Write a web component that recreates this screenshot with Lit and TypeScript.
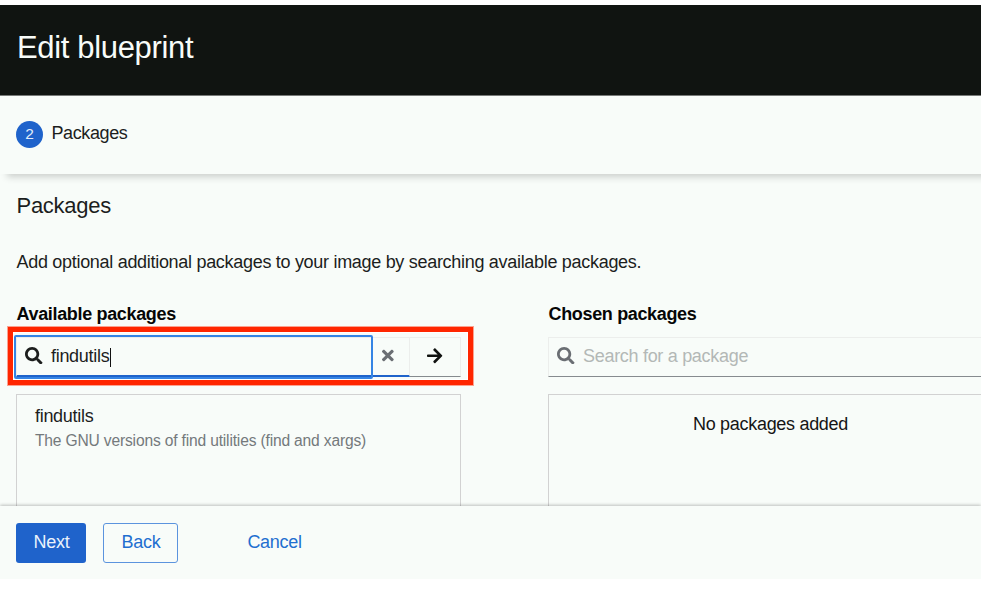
import { LitElement, html, css, svg } from "lit";
import { customElement, property } from "lit/decorators.js";

const icons = {
  search: {
    box: "0 0 512 512",
    d: "M505 442.7L405.3 343c-4.500-4.500-10.600-7-17-7H372c27.600-35.300 44-79.700 44-128C416 93.100 322.900 0 208 0S0 93.100 0 208s93.100 208 208 208c48.300 0 92.700-16.400 128-44v16.300c0 6.400 2.500 12.500 7 17l99.700 99.700c9.400 9.400 24.600 9.400 33.900 0l28.300-28.300c9.400-9.400 9.400-24.600.1-34zM208 336c-70.700 0-128-57.200-128-128 0-70.700 57.200-128 128-128 70.700 0 128 57.200 128 128 0 70.700-57.200 128-128 128z",
  },
  times: {
    box: "0 0 352 512",
    d: "M242.720 256l100.070-100.070c12.280-12.280 12.280-32.190 0-44.480l-22.240-22.240c-12.280-12.280-32.190-12.280-44.480 0L176 189.280 75.930 89.210c-12.280-12.280-32.190-12.280-44.480 0L9.210 111.450c-12.280 12.280-12.280 32.190 0 44.480L109.280 256 9.210 356.070c-12.280 12.280-12.280 32.190 0 44.480l22.240 22.240c12.280 12.280 32.200 12.280 44.480 0L176 322.720l100.070 100.070c12.280 12.280 32.200 12.280 44.480 0l22.240-22.240c12.280-12.280 12.280-32.190 0-44.480L242.720 256z",
  },
  arrow: {
    box: "0 0 448 512",
    d: "M190.500 66.900l22.200-22.200c9.400-9.400 24.600-9.400 33.900 0L441 239c9.400 9.400 9.400 24.600 0 33.900L246.600 467.300c-9.400 9.400-24.600 9.400-33.900 0l-22.200-22.200c-9.500-9.500-9.300-25 .4-34.300L311.400 296H24c-13.300 0-24-10.700-24-24v-32c0-13.300 10.700-24 24-24h287.400L190.900 101.200c-9.800-9.300-10-24.800-.4-34.300z",
  },
};

@customElement("ui-icon")
export class UiIcon extends LitElement {
  @property() name: keyof typeof icons = "search";
  static styles = css`
    :host { display: inline-flex; height: 17.500px; }
    svg { height: 100%; width: auto; fill: currentColor; display: block; }
  `;
  render() {
    const icon = icons[this.name];
    return html`<svg viewBox=${icon.box} aria-hidden="true">${svg`<path d=${icon.d}></path>`}</svg>`;
  }
}

@customElement("app-root")
export class AppRoot extends LitElement {
  static styles = css`
    :host {
      display: block; box-sizing: border-box; width: 985px; height: 589px;
      padding: 5px 4px 10px 0; background: #fff; overflow: hidden;
      font: 18px/26px "Liberation Sans", Arial, sans-serif; letter-spacing: -.3px; color: #1c1e1d;
    }
    * { box-sizing: border-box; }
    .wizard {
      height: 574px; display: flex; flex-direction: column; overflow: hidden;
      background: #f8fcf9;
    }
    .header {
      flex: none; height: 91px; padding: 21px 16px 0 17px; background: #101411;
      border-bottom: 1px solid #777a78; color: #f8fcf9;
    }
    h1 { margin: 0; font-size: 31px; line-height: 43px; font-weight: 400; letter-spacing: -.34px; }
    .step {
      flex: none; height: 78px; display: flex; align-items: center; gap: 8.500px;
      margin-right: -12px; padding: 0 16px 1px; background: #f8fcf9; position: relative; z-index: 1;
      box-shadow: 3px 7px 7px -4px rgba(0, 0, 0, .18);
    }
    .number {
      width: 27px; height: 27px; border-radius: 50%; background: #1f63cb; color: #e3edfa;
      font-size: 15.500px; line-height: 26px; text-align: center; letter-spacing: 0;
    }
    .step-name { padding-bottom: 3px; letter-spacing: -.4px; }
    .main { flex: 1; min-height: 0; overflow: hidden; padding: 17px 0 0 16px; }
    h2 { margin: 0 0 0 .5px; font-size: 22px; line-height: 30px; font-weight: 400; letter-spacing: -.27px; }
    .intro { margin: 28px 0 0 .5px; }
    .selector { margin-top: 26px; display: grid; grid-template-columns: 445px 445px; column-gap: 87px; }
    .label { font-weight: 700; line-height: 26px; color: #060606; padding-left: .5px; letter-spacing: -.34px; }
    .search { height: 40px; margin-top: 10px; display: flex; position: relative; }
    .field {
      flex: 1; display: flex; align-items: center; padding: 0 9px 3px 8px; gap: 8.500px;
      border: 1px solid #eceeec; border-bottom: 1px solid #868b8f;
    }
    .field.active { border-bottom: 2px solid #1f63cb; padding-bottom: 2px; }
    .value { flex: 1; display: flex; align-items: center; }
    .caret { width: 1px; height: 19px; background: #111; margin: 3px 0 0 1px; }
    .field .clear { color: #6a6e73; height: 17px; margin-right: 6px; }
    .placeholder { color: #b3b8b6; }
    .muted { color: #6a6e73; }
    .submit {
      width: 51px; display: flex; align-items: center; justify-content: center; padding-bottom: 3px;
      border: 1px solid #eceeec; border-left: 0; border-bottom-color: #868b8f; color: #101210;
    }
    .focus {
      position: absolute; left: -2px; top: -2px; width: 359px; height: 44px;
      border: 2px solid #3584e4; border-radius: 2px;
    }
    .callout {
      position: absolute; left: -8px; top: -10px; width: 465px; height: 58px;
      border: 5px solid #ff2600;
      box-shadow: 0 0 0 1px rgba(255, 38, 0, .42), inset 0 0 0 1px #fff;
    }
    .list { margin-top: 17px; height: 180px; border: 1px solid #d2d2d2; padding: 8px 18px; }
    .package { line-height: 26px; }
    .summary { font-size: 15.600px; line-height: 23px; color: #74797c; letter-spacing: -.17px; }
    .empty { text-align: center; padding-top: 8px; color: #151515; }
    .footer {
      flex: none; height: 73px; padding: 17px 16px 0; display: flex; align-items: flex-start;
      background: #f8fcf9; position: relative; box-shadow: 0 -1px 3px rgba(0, 0, 0, .24);
    }
    button {
      height: 40px; padding: 0 0 3px; border: 1px solid transparent; border-radius: 3px;
      font: inherit; letter-spacing: inherit; background: transparent; color: #1f6fd0;
    }
    .next { width: 70px; padding-left: 1px; background: #1f63cb; color: #eaf2fb; }
    .back { width: 75px; margin-left: 17px; padding-left: 1px; border-color: #5b94de; }
    .cancel { width: 90px; margin-left: 51.500px; }
  `;

  render() {
    return html`
      <div class="wizard">
        <header class="header"><h1>Edit blueprint</h1></header>
        <nav class="step"><span class="number">2</span><span class="step-name">Packages</span></nav>
        <main class="main">
          <h2>Packages</h2>
          <p class="intro">Add optional additional packages to your image by searching available packages.</p>
          <div class="selector">
            <section>
              <div class="label">Available packages</div>
              <div class="search">
                <div class="field active">
                  <ui-icon name="search"></ui-icon>
                  <div class="value"><span>findutils</span><span class="caret"></span></div>
                  <ui-icon class="clear" name="times"></ui-icon>
                </div>
                <div class="submit"><ui-icon name="arrow"></ui-icon></div>
                <div class="focus"></div>
                <div class="callout"></div>
              </div>
              <div class="list">
                <div class="package">findutils</div>
                <div class="summary">The GNU versions of find utilities (find and xargs)</div>
              </div>
            </section>
            <section>
              <div class="label">Chosen packages</div>
              <div class="search">
                <div class="field">
                  <ui-icon class="muted" name="search"></ui-icon>
                  <span class="placeholder">Search for a package</span>
                </div>
              </div>
              <div class="list"><div class="empty">No packages added</div></div>
            </section>
          </div>
        </main>
        <footer class="footer">
          <button class="next">Next</button>
          <button class="back">Back</button>
          <button class="cancel">Cancel</button>
        </footer>
      </div>
    `;
  }
}
